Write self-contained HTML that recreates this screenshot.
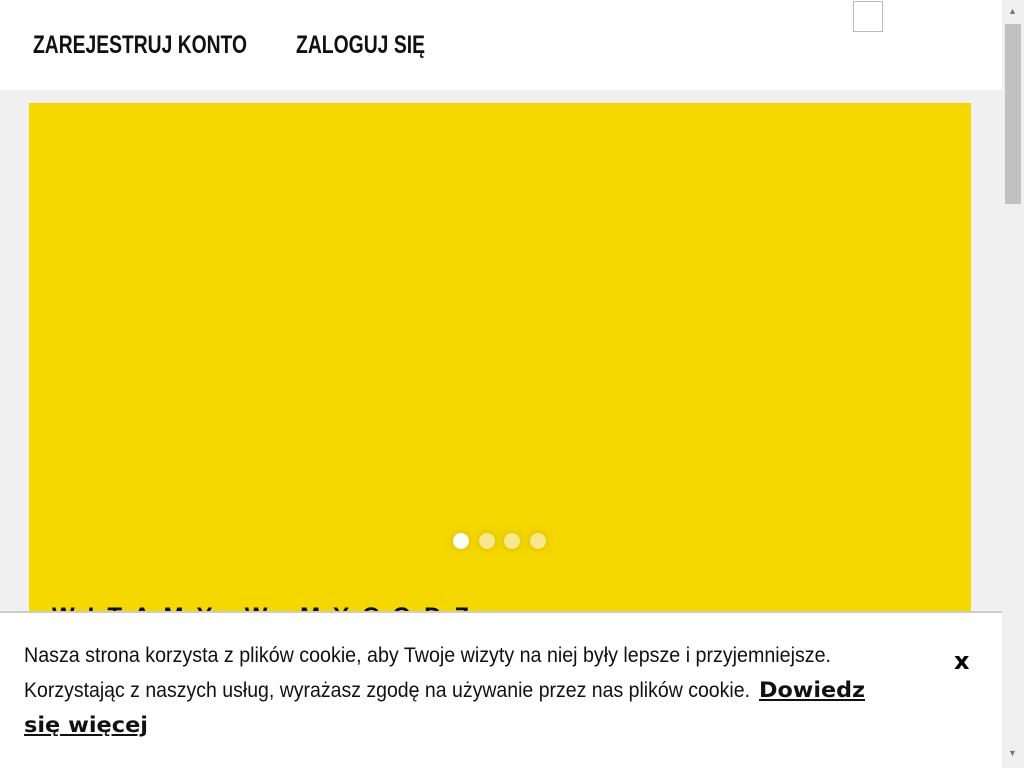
<!DOCTYPE html>
<html><head><meta charset="utf-8"><style>
body{margin:0;width:1024px;height:768px;overflow:hidden;background:#f0f0f0;font-family:"Liberation Sans",sans-serif;position:relative}
.hdr{position:absolute;left:0;top:0;width:1002px;height:90px;background:#fff}
.s{position:absolute;white-space:nowrap;transform-origin:0 0;display:inline-block}
.nav{top:31px;font-size:25px;font-weight:bold;color:#111}
.img{position:absolute;left:853px;top:1px;width:30px;height:31px;border:1px solid #bbb;box-sizing:border-box;background:#fff}
.yel{position:absolute;left:29px;top:103px;width:942px;height:520px;background:#f5d800}
.dot{position:absolute;top:533px;width:16px;height:16px;border-radius:50%;background:#f8e88a;box-shadow:0 0 8px rgba(180,150,0,.5)}
.sb{position:absolute;right:0;top:0;width:22px;height:768px;background:#f0f0f0}
.thumb{position:absolute;right:3px;top:24px;width:16px;height:180px;background:#c1c1c1}
.ck{position:absolute;left:0;top:611px;width:1002px;height:157px;background:#fff;border-top:2px solid #ccc;box-sizing:border-box}
.c{font-size:21px;color:#111}
.b{font-family:"DejaVu Sans",sans-serif;font-weight:bold;text-decoration:underline}
.x{position:absolute;left:954px;top:34px;font-size:24px;font-weight:bold;font-family:"DejaVu Sans",sans-serif}
</style></head><body>
<div class="hdr">
<span class="s nav" id="n1" style="left:33px">ZAREJESTRUJ KONTO</span>
<span class="s nav" id="n2" style="left:296px">ZALOGUJ SIĘ</span>
<div class="img"></div>
</div>
<div class="yel"></div>
<div class="dot" style="left:453px;background:#fff"></div>
<div class="dot" style="left:479px"></div>
<div class="dot" style="left:504px"></div>
<div class="dot" style="left:530px"></div>
<div style="position:absolute;left:52px;top:603px;font-size:24px;font-weight:bold;letter-spacing:13px;color:#111">WITAMY W MYCODZ</div>
<div class="ck">
<span class="s c" id="l1" style="left:24px;top:31px">Nasza strona korzysta z plików cookie, aby Twoje wizyty na niej były lepsze i przyjemniejsze.</span>
<span class="s c" id="l2" style="left:24px;top:66px">Korzystając z naszych usług, wyrażasz zgodę na używanie przez nas plików cookie.</span>
<span class="s c b" id="l3" style="left:759px;top:65px">Dowiedz</span>
<span class="s c b" id="l4" style="left:24px;top:100px">się więcej</span>
<div class="x">x</div>
</div>
<div class="sb"><div class="thumb"></div>
<div style="position:absolute;left:6px;top:6px;font-size:9px;color:#777">▲</div>
<div style="position:absolute;left:6px;top:748px;font-size:9px;color:#777">▼</div></div>
<script>
[["n1",214],["n2",129],["l1",807],["l2",726],["l3",106],["l4",124]].forEach(function(p){var e=document.getElementById(p[0]);var w=e.getBoundingClientRect().width;e.style.transform="scaleX("+(p[1]/w)+")";});
</script>
</body></html>
